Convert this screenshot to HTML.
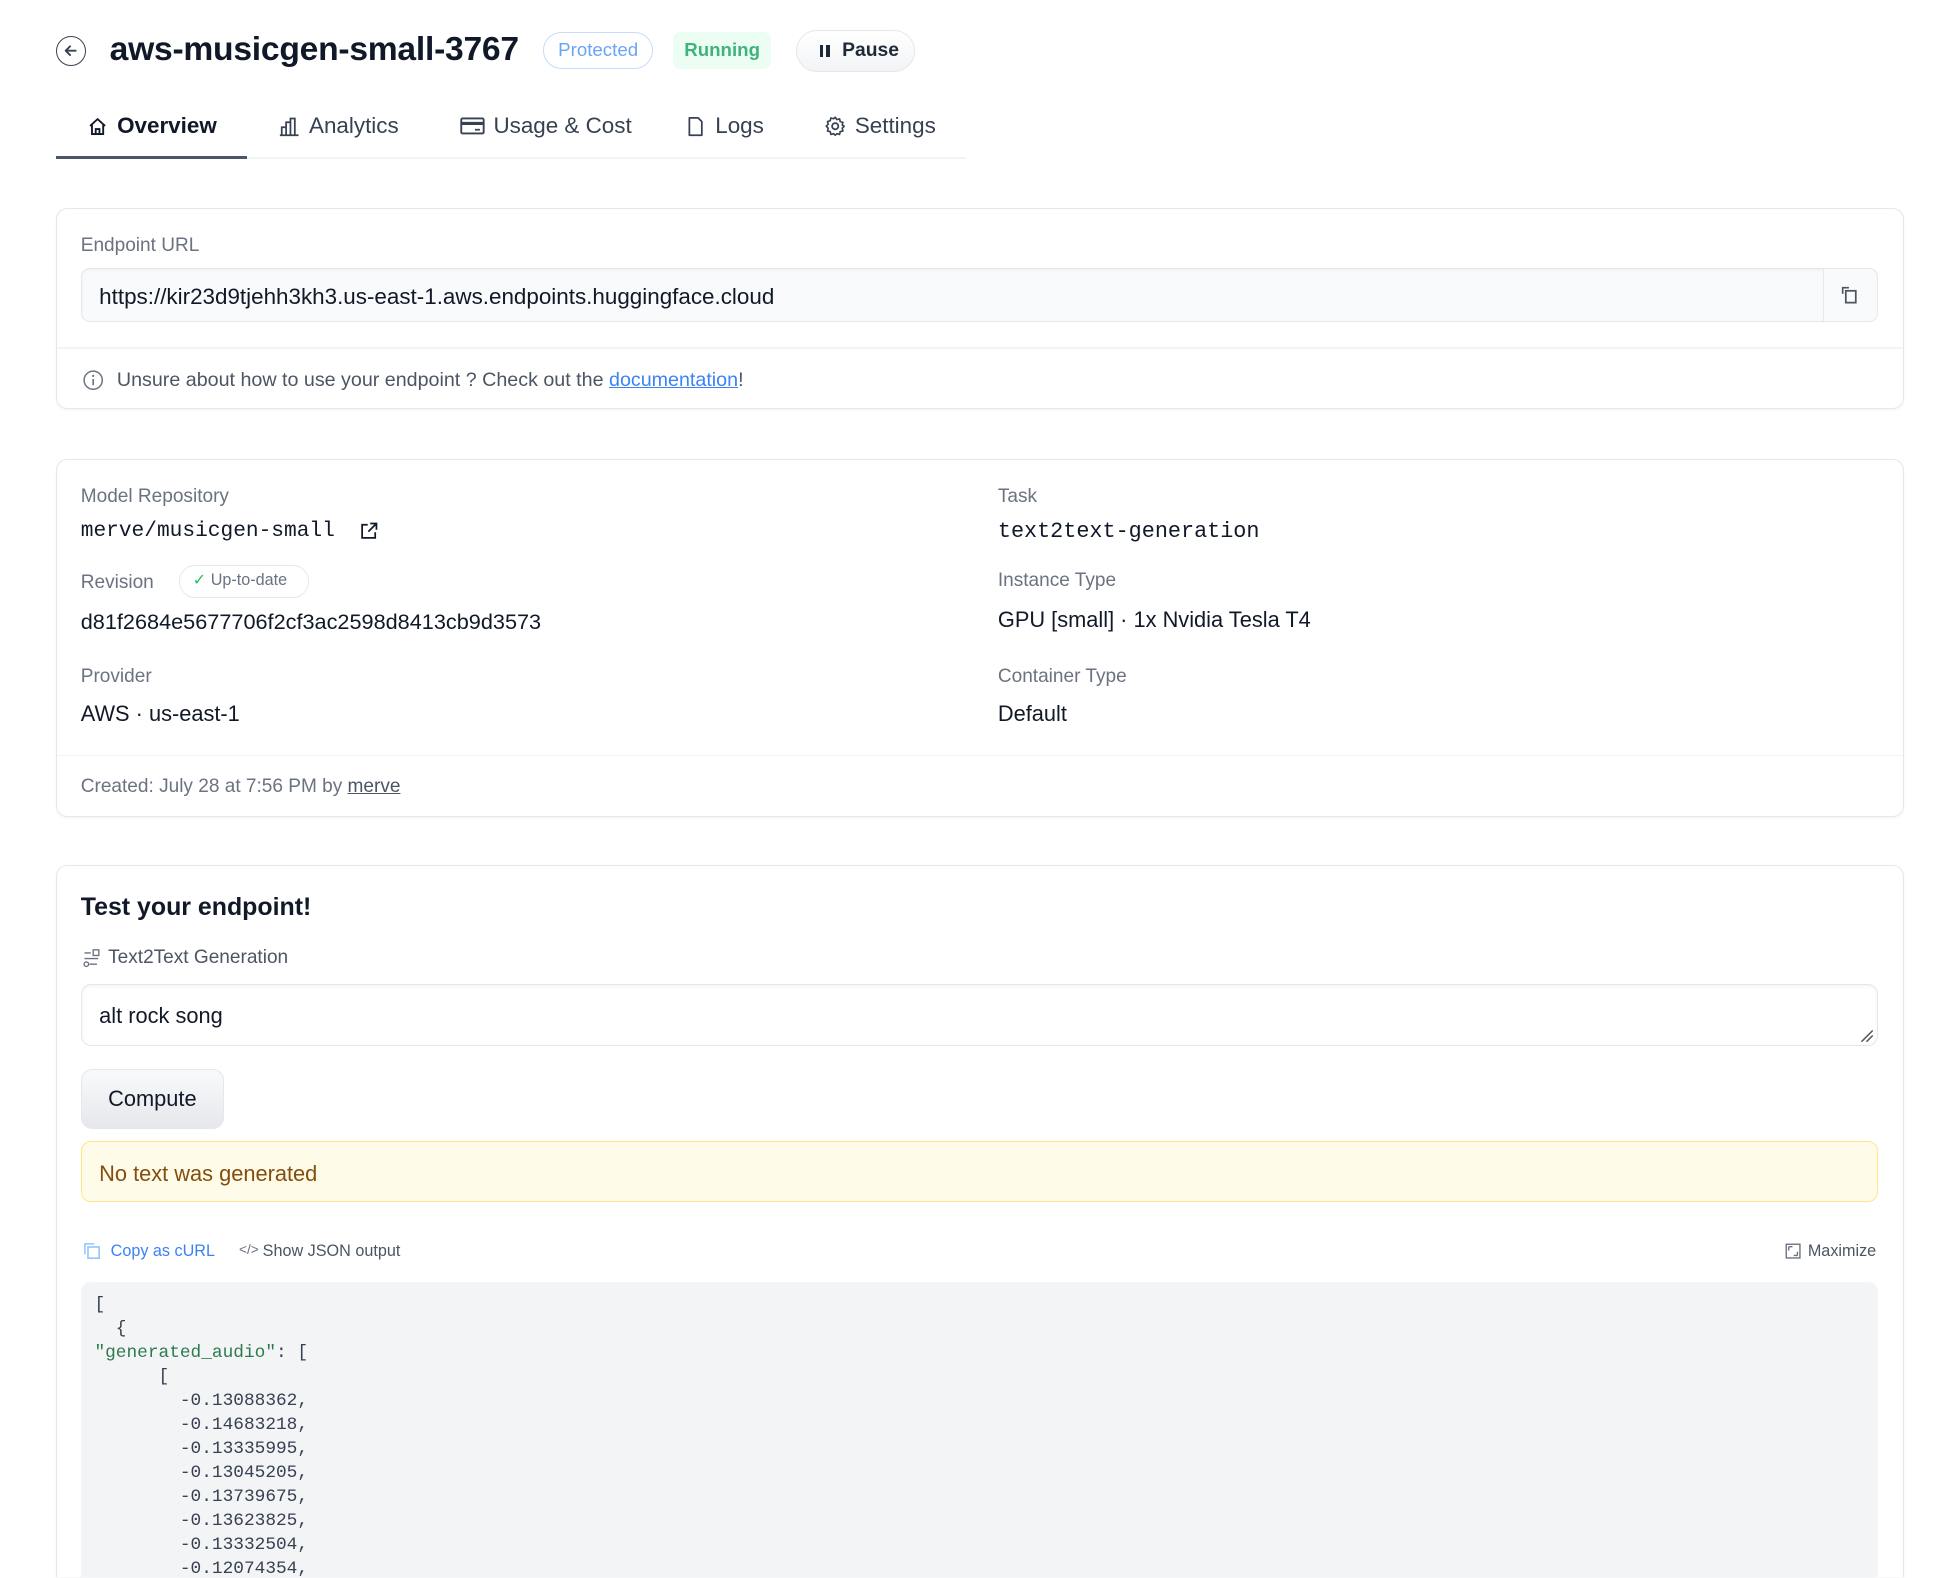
<!DOCTYPE html>
<html><head><meta charset="utf-8"><style>
html,body{margin:0;padding:0;background:#fff;width:1954px;height:1578px;overflow:hidden;}
#w{zoom:1.2461;width:1568px;height:1266px;overflow:hidden;position:relative;font-family:"Liberation Sans",sans-serif;color:#111827;}
.a{position:absolute;white-space:nowrap;}
.card{position:absolute;left:45px;width:1481px;border:1px solid #e5e7eb;border-radius:9px;background:#fff;box-shadow:0 1px 2px rgba(0,0,0,.04);}
.lbl{position:absolute;font-size:15.3px;color:#6b7280;white-space:nowrap;}
.val{position:absolute;font-size:17.5px;color:#111827;white-space:nowrap;}
.mono{font-family:"Liberation Mono",monospace;}
.tab{position:absolute;top:91px;font-size:18px;color:#374151;display:flex;align-items:center;gap:7px;white-space:nowrap;}
svg{display:block}
pre{margin:0;font-family:"Liberation Mono",monospace;font-size:14.3px;line-height:19.2px;color:#374151;}
</style></head><body><div id="w">

<div class="a" style="left:45px;top:29px;width:24px;height:24px;border:1.3px solid #374151;border-radius:50%;box-sizing:border-box;">
<svg width="22" height="22" viewBox="0 0 22 22"><path d="M15 11H7M10.5 7.5L7 11l3.5 3.5" stroke="#374151" stroke-width="1.5" fill="none" stroke-linecap="round" stroke-linejoin="round"/></svg></div>
<div class="a" style="left:88px;top:25px;font-size:27px;font-weight:bold;letter-spacing:-0.2px;">aws-musicgen-small-3767</div>
<div class="a" style="left:436px;top:26px;width:88px;height:29px;border:1px solid #c7dcfb;border-radius:15px;box-sizing:border-box;color:#6aa5f5;font-size:15px;line-height:27px;text-align:center;">Protected</div>
<div class="a" style="left:540px;top:26px;width:79px;height:29px;background:#ecfdf3;border-radius:6px;color:#3fb37a;font-size:15px;font-weight:bold;line-height:29px;text-align:center;">Running</div>
<div class="a" style="left:639px;top:24px;width:95px;height:34px;border:1px solid #e5e7eb;border-radius:17px;box-sizing:border-box;background:linear-gradient(#fff,#f3f4f6);font-size:15.5px;font-weight:bold;color:#1f2937;line-height:32px;">
<span style="position:absolute;left:18px;top:11px;width:3px;height:10px;background:#1f2937"></span><span style="position:absolute;left:23px;top:11px;width:3px;height:10px;background:#1f2937"></span>
<span style="position:absolute;left:36px;">Pause</span></div>

<div class="a" style="left:45px;top:126px;width:730px;height:2px;background:#f3f4f6"></div>
<div class="a" style="left:45px;top:125px;width:153px;height:3px;background:#4b5563"></div>
<div class="tab" style="left:70px;font-weight:bold;color:#111827;"><svg width="17" height="17" viewBox="0 0 17 17"><path d="M2.5 8L8.5 2.5 14.5 8M4 7v7.5h9V7M7 14.5v-4h3v4" stroke="#111827" stroke-width="1.5" fill="none"/></svg>Overview</div>
<div class="tab" style="left:223px;"><svg width="18" height="17" viewBox="0 0 18 17"><path d="M1.5 15.5h15M3 15.5V9h3.5v6.5M6.5 15.5V5H10v10.5M10 15.5V2h3.5v13.5" stroke="#374151" stroke-width="1.4" fill="none"/></svg>Analytics</div>
<div class="tab" style="left:369px;"><svg width="20" height="16" viewBox="0 0 20 16"><rect x="1" y="2" width="18" height="12" rx="1" stroke="#374151" stroke-width="1.5" fill="none"/><path d="M1 6h18" stroke="#374151" stroke-width="2.5"/><path d="M12 11h4" stroke="#374151" stroke-width="1.4"/></svg>Usage &amp; Cost</div>
<div class="tab" style="left:550px;"><svg width="17" height="17" viewBox="0 0 17 17"><path d="M3.5 1.5h7l3 3v11h-10z" stroke="#374151" stroke-width="1.4" fill="none" stroke-linejoin="round"/></svg>Logs</div>
<div class="tab" style="left:661px;"><svg width="18" height="18" viewBox="0 0 18 18"><circle cx="9" cy="9" r="2.5" stroke="#374151" stroke-width="1.4" fill="none"/><path d="M9 1.8l1.3 1.9 2.2-.6.5 2.2 2.2.6-.6 2.2L16.2 9l-1.6 1.6.6 2.2-2.2.6-.5 2.2-2.2-.6L9 16.2l-1.3-1.2-2.2.6-.5-2.2-2.2-.6.6-2.2L1.8 9l1.6-1.6-.6-2.2 2.2-.6.5-2.2 2.2.6z" stroke="#374151" stroke-width="1.3" fill="none" stroke-linejoin="round"/></svg>Settings</div>

<div class="card" style="top:167px;height:160px;">
  <div class="lbl" style="left:19px;top:21px;">Endpoint URL</div>
  <div class="a" style="left:19px;top:47px;width:1442px;height:44px;border:1px solid #e5e7eb;border-radius:7px;background:#f9fafb;box-sizing:border-box;box-shadow:inset 0 1px 2px rgba(0,0,0,.04);">
    <div class="a" style="left:14px;top:12px;font-size:18px;color:#111827;">https://kir23d9tjehh3kh3.us-east-1.aws.endpoints.huggingface.cloud</div>
    <div class="a" style="right:0;top:0;width:42px;height:42px;border-left:1px solid #e5e7eb;background:#f9fafb;border-radius:0 7px 7px 0;">
      <svg width="42" height="42" viewBox="0 0 42 42"><path d="M15 20v-5h5" stroke="#4b5563" stroke-width="1.3" fill="none"/><rect x="17.5" y="17.5" width="8" height="9.5" stroke="#4b5563" stroke-width="1.4" fill="none"/></svg></div>
  </div>
  <div class="a" style="left:0;top:111px;width:1481px;height:1px;background:#f3f4f6"></div>
  <svg class="a" style="left:20px;top:128px" width="18" height="18" viewBox="0 0 18 18"><circle cx="9" cy="9" r="7.3" stroke="#6b7280" stroke-width="1.2" fill="none"/><path d="M9 8v5" stroke="#6b7280" stroke-width="1.3"/><circle cx="9" cy="5.5" r=".9" fill="#6b7280"/></svg>
  <div class="a" style="left:48px;top:128px;font-size:15.8px;color:#4b5563;">Unsure about how to use your endpoint ? Check out the <span style="color:#3b82f6;text-decoration:underline;">documentation</span>!</div>
</div>

<div class="card" style="top:368px;height:286px;">
  <div class="lbl" style="left:19px;top:21px;">Model Repository</div>
  <div class="val mono" style="left:19px;top:48px;font-size:17px;">merve/musicgen-small</div>
  <svg class="a" style="left:242px;top:49px" width="16" height="16" viewBox="0 0 16 16"><path d="M7 3H2.5v10.5H13V9M9 2h5v5M14 2L7.5 8.5" stroke="#111827" stroke-width="1.4" fill="none"/></svg>
  <div class="lbl" style="left:19px;top:90px;">Revision</div>
  <div class="a" style="left:98px;top:85px;width:104px;height:26px;border:1px solid #e5e7eb;border-radius:13px;box-sizing:border-box;font-size:13px;color:#6b7280;line-height:24px;"><span style="color:#22c55e;margin-left:10px;">✓</span> Up-to-date</div>
  <div class="val" style="left:19px;top:120px;font-size:17.4px;">d81f2684e5677706f2cf3ac2598d8413cb9d3573</div>
  <div class="lbl" style="left:19px;top:166px;">Provider</div>
  <div class="val" style="left:19px;top:194px;">AWS · us-east-1</div>
  <div class="lbl" style="left:755px;top:21px;">Task</div>
  <div class="val mono" style="left:755px;top:48px;">text2text-generation</div>
  <div class="lbl" style="left:755px;top:89px;">Instance Type</div>
  <div class="val" style="left:755px;top:118px;">GPU [small] · 1x Nvidia Tesla T4</div>
  <div class="lbl" style="left:755px;top:166px;">Container Type</div>
  <div class="val" style="left:755px;top:194px;">Default</div>
  <div class="a" style="left:0;top:237px;width:1481px;height:1px;background:#f3f4f6"></div>
  <div class="lbl" style="left:19px;top:254px;color:#6b7280;">Created: July 28 at 7:56 PM by <span style="text-decoration:underline;color:#4b5563">merve</span></div>
</div>

<div class="card" style="top:694px;height:571px;border-bottom:none;border-radius:9px 9px 0 0;">
  <div class="a" style="left:19px;top:22px;font-size:20px;font-weight:bold;">Test your endpoint!</div>
  <svg class="a" style="left:20px;top:66px" width="16" height="16" viewBox="0 0 16 16"><rect x="9" y="1.5" width="4.5" height="4.5" stroke="#6b7280" stroke-width="1.1" fill="none"/><circle cx="3.5" cy="13" r="1.8" stroke="#6b7280" stroke-width="1.1" fill="none"/><path d="M2 4h5M2 8.5h11M6 13h6" stroke="#6b7280" stroke-width="1.1"/></svg>
  <div class="lbl" style="left:41px;top:65px;color:#4b5563;">Text2Text Generation</div>
  <div class="a" style="left:19px;top:95px;width:1442px;height:50px;border:1px solid #e5e7eb;border-radius:8px;box-sizing:border-box;box-shadow:inset 0 1px 3px rgba(0,0,0,.05);">
    <div class="a" style="left:14px;top:14px;font-size:17.5px;">alt rock song</div>
    <svg class="a" style="right:2px;bottom:2px" width="12" height="12" viewBox="0 0 12 12"><path d="M2 11L11 2M6 11l5-5" stroke="#555" stroke-width="1.2"/></svg>
  </div>
  <div class="a" style="left:19px;top:163px;width:115px;height:48px;border:1px solid #e5e7eb;border-radius:9px;box-sizing:border-box;background:linear-gradient(#f9fafb,#e5e7eb);font-size:17.5px;line-height:47px;text-align:center;color:#111827;">Compute</div>
  <div class="a" style="left:19px;top:221px;width:1442px;height:49px;border:1px solid #fde68a;border-radius:8px;box-sizing:border-box;background:#fefce8;">
    <div class="a" style="left:14px;top:15px;font-size:17.5px;color:#854d0e;">No text was generated</div></div>
  <svg class="a" style="left:21px;top:302px" width="15" height="15" viewBox="0 0 15 15"><path d="M1.5 10V1.5H9" stroke="#93c5fd" stroke-width="1.2" fill="none"/><rect x="4" y="4" width="9" height="9" stroke="#93c5fd" stroke-width="1.3" fill="none"/></svg>
  <div class="a" style="left:43px;top:302px;font-size:13px;color:#3b82f6;">Copy as cURL</div>
  <div class="a" style="left:146px;top:302px;font-size:11px;color:#6b7280;">&lt;/&gt;</div>
  <div class="a" style="left:165px;top:302px;font-size:13px;color:#4b5563;">Show JSON output</div>
  <svg class="a" style="left:1387px;top:303px" width="13" height="13" viewBox="0 0 13 13"><rect x="1" y="1" width="11" height="11" stroke="#6b7280" stroke-width="1.1" fill="none"/><path d="M3 3h3M3 3v3M10 10H7M10 10V7" stroke="#6b7280" stroke-width="1.1"/></svg>
  <div class="a" style="left:1405px;top:302px;font-size:13px;color:#4b5563;">Maximize</div>
  <div class="a" style="left:19px;top:334px;width:1442px;height:237px;background:#f3f4f6;border-radius:8px 8px 0 0;overflow:hidden;">
    <pre style="position:absolute;left:11px;top:10px;">[
  {
<span style="color:#2f7a4f">"generated_audio"</span>: [
      [
        -0.13088362,
        -0.14683218,
        -0.13335995,
        -0.13045205,
        -0.13739675,
        -0.13623825,
        -0.13332504,
        -0.12074354,</pre>
  </div>
</div>

</div></body></html>
